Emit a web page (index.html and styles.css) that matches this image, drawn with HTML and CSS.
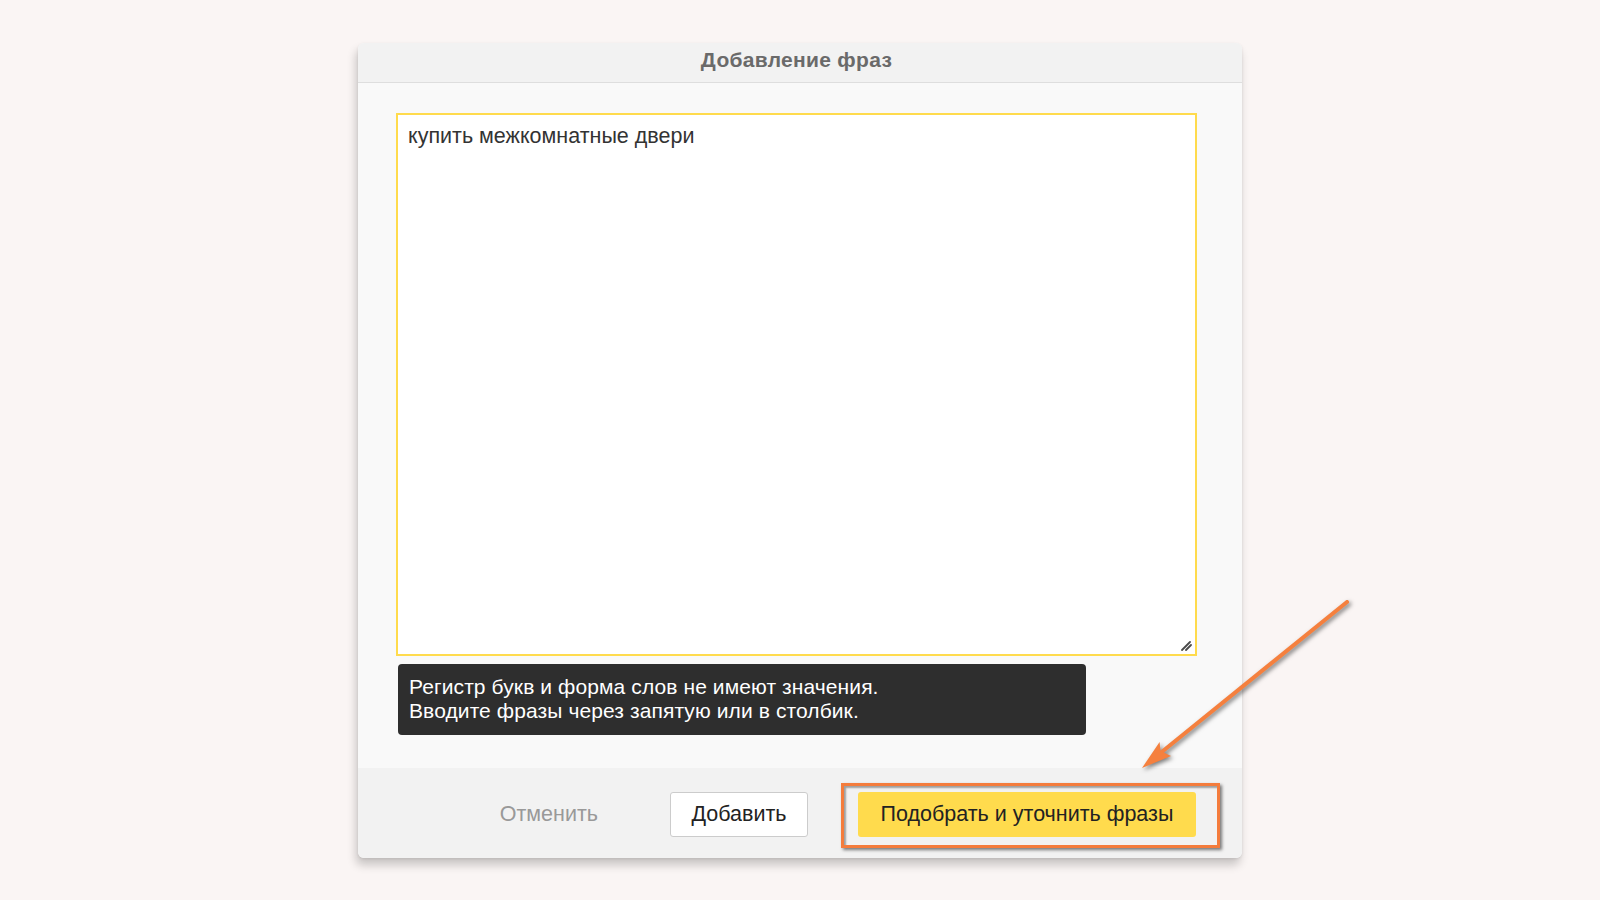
FILE: index.html
```html
<!DOCTYPE html>
<html lang="ru">
<head>
<meta charset="utf-8">
<title>Добавление фраз</title>
<link rel="stylesheet" href="styles.css">
</head>
<body>
<div class="page">
  <div class="dialog">
    <div class="dialog-header">Добавление фраз</div>
    <div class="dialog-body">
      <div class="phrase-box">
        <div class="phrase-text">купить межкомнатные двери</div>
        <svg class="resize-grip" width="12" height="12" viewBox="0 0 12 12">
          <path d="M2 11 L10 3 M6 11 L11 6" stroke="#4a4a4a" stroke-width="1.8" stroke-linecap="round"/>
        </svg>
      </div>
      <div class="hint">
        Регистр букв и форма слов не имеют значения.<br>
        Вводите фразы через запятую или в столбик.
      </div>
    </div>
    <div class="dialog-footer">
      <button class="btn btn-cancel">Отменить</button>
      <button class="btn btn-add">Добавить</button>
      <button class="btn btn-primary">Подобрать и уточнить фразы</button>
    </div>
    <div class="highlight-frame"></div>
  </div>
  <svg class="pointer-arrow" width="1600" height="900" viewBox="0 0 1600 900">
    <g class="arrow-shape">
      <line x1="1347" y1="602" x2="1158" y2="755" stroke="#f5803e" stroke-width="4" stroke-linecap="round"/>
      <polygon points="1142,768 1159.6,742.1 1160.5,751 1171,756.1" fill="#f5803e"/>
    </g>
  </svg>
</div>
</body>
</html>
```
FILE: styles.css
```css
* { box-sizing: border-box; }

html, body {
  margin: 0;
  padding: 0;
}

body {
  background: #faf5f4;
  font-family: "Liberation Sans", Arial, sans-serif;
  color: #333;
  width: 1600px;
  height: 900px;
  overflow: hidden;
}

.page {
  position: relative;
  width: 1600px;
  height: 900px;
  padding-top: 43px;
}

.dialog {
  position: relative;
  width: 884px;
  height: 815px;
  margin: 0 auto;
  background: #f9f9f9;
  border-radius: 6px;
  box-shadow: -2px 7px 10px rgba(0, 0, 0, 0.2), 0 1px 3px rgba(0, 0, 0, 0.08);
  display: flex;
  flex-direction: column;
}

.dialog-header {
  height: 40px;
  flex: none;
  background: #f2f2f2;
  border-bottom: 1px solid #dedede;
  border-radius: 6px 6px 0 0;
  text-align: center;
  font-weight: bold;
  font-size: 21px;
  line-height: 33px;
  color: #6a6a6a;
  letter-spacing: 0.3px;
  padding-right: 7px;
}

.dialog-body {
  flex: 1;
  padding: 30px 45px 0 38px;
  display: flex;
  flex-direction: column;
  gap: 8px;
}

.phrase-box {
  position: relative;
  height: 543px;
  background: #fff;
  border: 2px solid #ffdb4d;
  padding: 8px 10px;
}

.phrase-text {
  font-size: 21.5px;
  line-height: 27px;
  color: #333;
}

.resize-grip {
  position: absolute;
  right: 3px;
  bottom: 3px;
}

.hint {
  width: 688px;
  height: 71px;
  margin-left: 2px;
  background: #2e2e2e;
  border-radius: 4px;
  color: #fff;
  font-size: 21px;
  line-height: 24px;
  padding: 11px 11px;
  letter-spacing: 0.1px;
}

.dialog-footer {
  height: 90px;
  flex: none;
  background: #f2f2f2;
  border-radius: 0 0 6px 6px;
  display: flex;
  justify-content: flex-end;
  align-items: flex-start;
  padding: 24px 46px 0 0;
}

.btn {
  font-family: "Liberation Sans", Arial, sans-serif;
  font-size: 21.5px;
  height: 45px;
  border-radius: 3px;
  cursor: pointer;
}

.btn-cancel {
  background: none;
  border: none;
  color: #999;
  padding: 0;
  margin-right: 72px;
}

.btn-add {
  background: #fff;
  border: 1px solid #ccc;
  color: #222;
  width: 138px;
  padding: 0;
}

.btn-primary {
  margin-left: 50px;
  width: 338px;
  background: #ffdb4d;
  border: none;
  color: #222;
  padding: 0;
}

.highlight-frame {
  position: absolute;
  left: 483px;
  top: 740px;
  width: 379px;
  height: 65px;
  border: 3px solid #f47c3c;
  box-shadow: 2px 2px 3px rgba(0, 0, 0, 0.5), inset 2px 2px 2px rgba(0, 0, 0, 0.35);
  pointer-events: none;
}

.pointer-arrow {
  position: absolute;
  left: 0;
  top: 0;
  pointer-events: none;
}

.arrow-shape {
  filter: drop-shadow(2px 2px 2px rgba(0, 0, 0, 0.5));
}
```
